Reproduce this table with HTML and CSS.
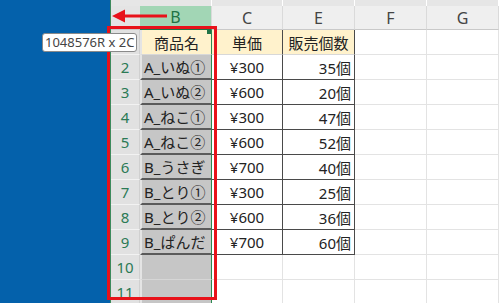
FILE: index.html
```html
<!DOCTYPE html>
<html lang="ja">
<head>
<meta charset="utf-8">
<link rel="stylesheet" href="styles.css">
</head>
<body>
<div class="screen">
  <div class="side"></div>
  <div class="sheet">
    <div class="grid">
      <div class="corner"></div>
      <div class="colh sel">B</div>
      <div class="colh">C</div>
      <div class="colh">E</div>
      <div class="colh">F</div>
      <div class="colh">G</div>

      <div class="rowh">1</div>
      <div class="bcell thb">商品名<span class="mark"></span></div>
      <div class="cell th tc">単価</div>
      <div class="cell th tc">販売個数</div>
      <div class="cell"></div><div class="cell"></div>

      <div class="rowh">2</div><div class="bcell">A_いぬ①</div><div class="cell td tc">¥300</div><div class="cell td tr">35個</div><div class="cell"></div><div class="cell"></div>
      <div class="rowh">3</div><div class="bcell">A_いぬ②</div><div class="cell td tc">¥600</div><div class="cell td tr">20個</div><div class="cell"></div><div class="cell"></div>
      <div class="rowh">4</div><div class="bcell">A_ねこ①</div><div class="cell td tc">¥300</div><div class="cell td tr">47個</div><div class="cell"></div><div class="cell"></div>
      <div class="rowh">5</div><div class="bcell">A_ねこ②</div><div class="cell td tc">¥600</div><div class="cell td tr">52個</div><div class="cell"></div><div class="cell"></div>
      <div class="rowh">6</div><div class="bcell">B_うさぎ</div><div class="cell td tc">¥700</div><div class="cell td tr">40個</div><div class="cell"></div><div class="cell"></div>
      <div class="rowh">7</div><div class="bcell">B_とり①</div><div class="cell td tc">¥300</div><div class="cell td tr">25個</div><div class="cell"></div><div class="cell"></div>
      <div class="rowh">8</div><div class="bcell">B_とり②</div><div class="cell td tc">¥600</div><div class="cell td tr">36個</div><div class="cell"></div><div class="cell"></div>
      <div class="rowh">9</div><div class="bcell">B_ぱんだ</div><div class="cell td tc">¥700</div><div class="cell td tr">60個</div><div class="cell"></div><div class="cell"></div>
      <div class="rowh">10</div><div class="bcell empty"></div><div class="cell"></div><div class="cell"></div><div class="cell"></div><div class="cell"></div>
      <div class="rowh">11</div><div class="bcell empty"></div><div class="cell"></div><div class="cell"></div><div class="cell"></div><div class="cell"></div>
    </div>
  </div>
  <div class="redbox"></div>
  <svg class="arrow" width="60" height="16" viewBox="0 0 60 16">
    <polygon points="0,8 13,1.5 13,14.5" fill="#e8121a"/>
    <rect x="11" y="6.5" width="44" height="3" fill="#e8121a"/>
  </svg>
  <div class="tip">1048576R x 2C</div>
</div>
</body>
</html>
```

FILE: styles.css
```css
html, body {
  margin: 0;
  padding: 0;
  background: #ffffff;
}
.screen {
  position: relative;
  width: 500px;
  height: 303px;
  overflow: hidden;
  display: flex;
  font-family: "Noto Sans", "Noto Sans CJK JP", sans-serif;
}
.side {
  width: 110px;
  flex: none;
  background: #0461ab;
}
.sheet {
  flex: 1;
  border-left: 1px solid #3d8a5d;
  background: #fff;
}
.grid {
  display: grid;
  grid-template-columns: 29px 72px 71px 72px 72px 72px;
  grid-template-rows: 30px repeat(11, 25px);
}
.corner {
  background: #e4e4e4;
  border-bottom: 1px solid #c9c9c9;
}
.colh {
  box-sizing: border-box;
  margin-top: 6px;
  background: #efefef;
  border-right: 1px solid #dadada;
  border-bottom: 1px solid #c9c9c9;
  color: #444;
  font-size: 16px;
  display: flex;
  align-items: center;
  justify-content: center;
  line-height: 1;
}
.colh.sel {
  background: #a2d6b5;
  color: #217346;
  border-bottom: 2px solid #217346;
}
.grid > .corner, .grid > .colh { position: relative; }
.grid > .corner::before, .grid > .colh::before {
  content: "";
  position: absolute;
  left: 0; right: 0; top: -6px; height: 6px;
  background: #e6e6e6;
}
.corner::before { top: 0 !important; }
.rowh {
  box-sizing: border-box;
  background: #e1e1e1;
  border-bottom: 1px solid #f2f2f2;
  border-right: 1px solid #d0d0d0;
  color: #2b7a55;
  font-size: 15px;
  display: flex;
  align-items: center;
  justify-content: center;
}
.bcell {
  position: relative;
  box-sizing: border-box;
  background: #c6c6c6;
  border-left: 2px solid #e4e4e4;
  border-right: 1px solid #2b8a50;
  border-bottom: 2px solid #5a5a5a;
  color: #222;
  font-size: 15px;
  padding-left: 2px;
  display: flex;
  align-items: center;
  white-space: nowrap;
}
.bcell.thb {
  background: #fff2cc;
  justify-content: center;
  border-bottom: 1px solid #d8d8d8;
  padding-left: 0;
}
.bcell.empty {
  border-bottom: 1px solid #d6d6d6;
}
.mark {
  position: absolute;
  right: 0;
  top: 0;
  width: 4px;
  height: 4px;
  background: #217346;
}
.cell {
  box-sizing: border-box;
  border-right: 1px solid #e3e3e3;
  border-bottom: 1px solid #e3e3e3;
  color: #222;
  font-size: 15px;
  display: flex;
  align-items: center;
  white-space: nowrap;
}
.cell.th {
  background: #fff2cc;
  border-right: 1px solid #4a4a4a;
  border-bottom: 1px solid #d8d8d8;
}
.cell.td {
  border-right: 1px solid #4a4a4a;
  border-bottom: 1px solid #4a4a4a;
}
.tc { justify-content: center; }
.tr { justify-content: flex-end; padding-right: 3px; }
.redbox {
  position: absolute;
  left: 107px;
  top: 26px;
  width: 110px;
  height: 274px;
  box-sizing: border-box;
  border: 3px solid #e8121a;
}
.arrow {
  position: absolute;
  left: 112px;
  top: 8px;
}
.tip {
  position: absolute;
  left: 42px;
  top: 33px;
  box-sizing: border-box;
  width: 95px;
  height: 19px;
  background: #fff;
  border: 1px solid #8a8a8a;
  border-radius: 3px;
  color: #444;
  font-size: 13px;
  line-height: 17px;
  padding-left: 2px;
  white-space: nowrap;
}
```
